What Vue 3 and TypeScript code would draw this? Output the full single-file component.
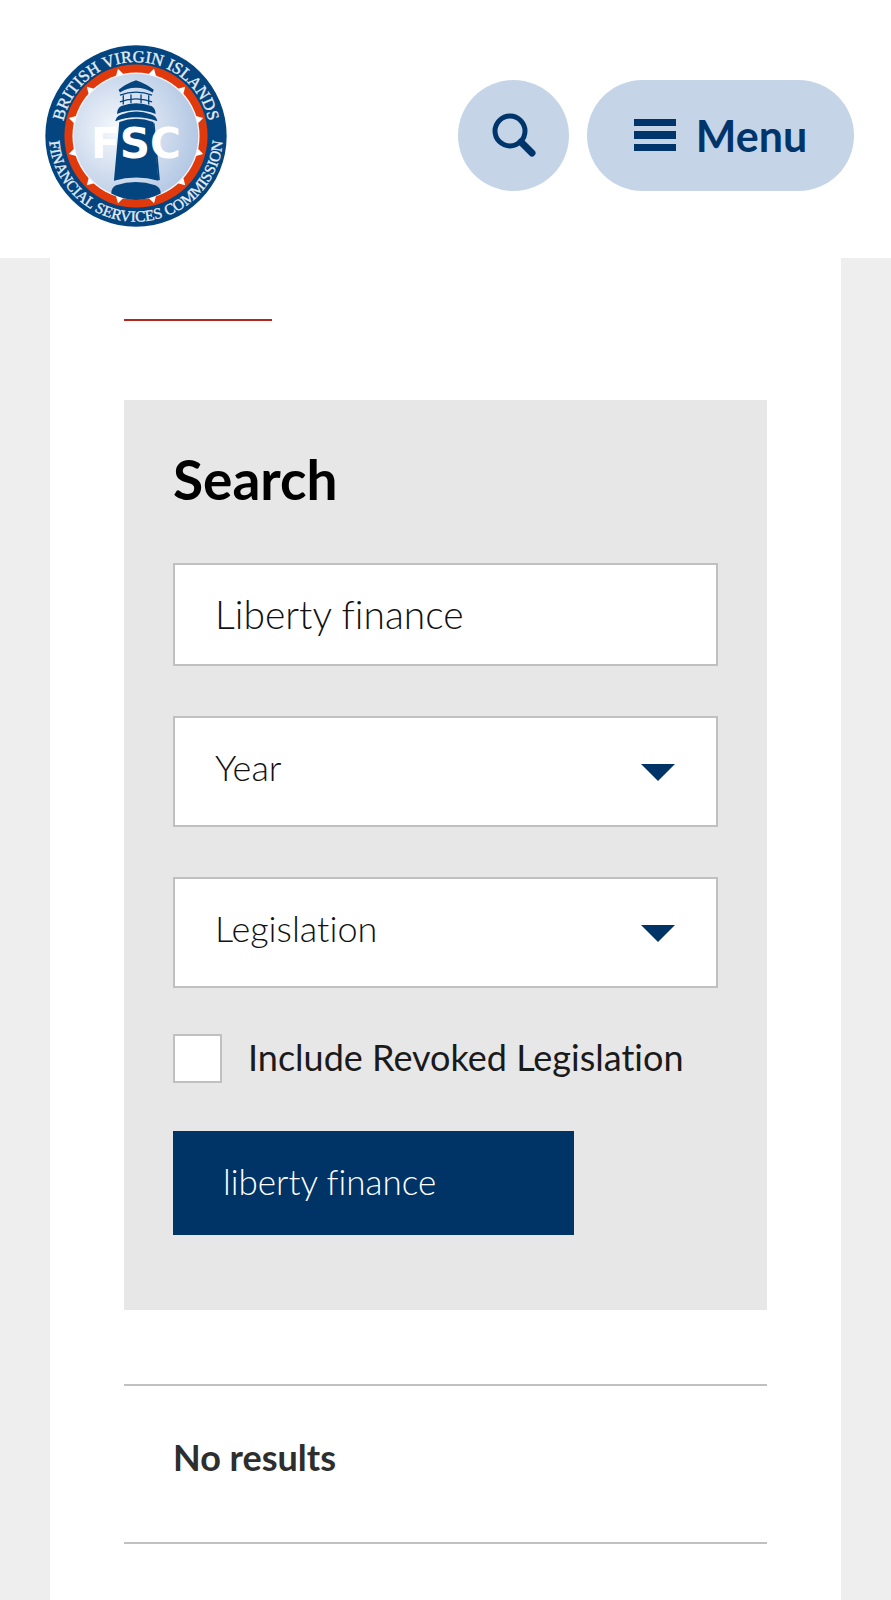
<script setup lang="ts">
import { ref } from 'vue'

const keywords = ref('Liberty finance')
const year = ref('')
const category = ref('')
const includeRevoked = ref(false)

const years: string[] = ['2024', '2023', '2022', '2021']
const categories: string[] = ['Acts', 'Regulations', 'Orders']
const notches: number[] = Array.from({ length: 12 }, (_, i) => i * 30 + 15)
</script>

<template>
  <div class="page">
    <header class="header">
      <a class="logo" href="#" aria-label="British Virgin Islands Financial Services Commission">
        <svg viewBox="0 0 544 544" aria-hidden="true">
          <defs>
            <radialGradient id="sky" cx="0.35" cy="0.45" r="0.65">
              <stop offset="0" stop-color="#f6f9fd" />
              <stop offset="0.5" stop-color="#d5e0f0" />
              <stop offset="1" stop-color="#b3c8e4" />
            </radialGradient>
            <path id="arc-top" d="M 51 272 A 221 221 0 0 1 493 272" />
            <path id="arc-bottom" d="M 12 268 A 260 260 0 0 0 532 268" />
          </defs>
          <circle cx="272" cy="272" r="271" fill="#05457f" />
          <circle cx="272" cy="272" r="214" fill="#e03a0c" />
          <path
            v-for="angle in notches"
            :key="angle"
            d="M 272 64 L 285 86 L 259 86 Z"
            fill="#fff"
            :transform="`rotate(${angle} 272 272)`"
          />
          <circle cx="272" cy="272" r="190" fill="#f4f6fa" />
          <circle cx="272" cy="272" r="186" fill="url(#sky)" />
          <g fill="#05457f">
            <path d="M 220 134 Q 240 116 272 105 Q 304 116 325 134 L 322 142 Q 300 128 272 128 Q 244 128 224 142 Z" />
            <path d="M 215 206 Q 216 188 228 182 Q 272 166 318 182 Q 330 188 331 206 Q 272 184 215 206 Z" />
            <path d="M 210 228 Q 214 212 228 208 Q 272 190 318 208 Q 332 212 336 228 Q 272 204 210 228 Z" />
            <path d="M 222 230 Q 272 211 324 230 L 339 406 Q 272 386 206 406 Z" />
            <path d="M 198 444 Q 198 426 212 419 Q 272 400 330 419 Q 346 426 346 444 Q 310 463 272 463 Q 234 463 198 444 Z" />
          </g>
          <path d="M 325 234 L 341 404" stroke="#05457f" stroke-width="5" />
          <path
            d="M 234 150 V 178 M 257 148 V 174 M 287 148 V 174 M 310 150 V 178 M 224 150 Q 272 132 320 150 M 224 170 Q 272 152 320 170"
            fill="none"
            stroke="#05457f"
            stroke-width="4"
          />
          <text class="logo-name" x="272" y="338" text-anchor="middle">FSC</text>
          <text class="logo-ring logo-ring-top" text-anchor="middle">
            <textPath href="#arc-top" startOffset="50%">BRITISH VIRGIN ISLANDS</textPath>
          </text>
          <text class="logo-ring" text-anchor="middle">
            <textPath href="#arc-bottom" startOffset="50%">FINANCIAL SERVICES COMMISSION</textPath>
          </text>
        </svg>
      </a>
      <div class="actions">
        <button class="round" type="button" aria-label="Search">
          <svg width="46" height="46" viewBox="0 0 46 46" fill="none" aria-hidden="true">
            <path d="M30 30 L41 41" stroke="#00356b" stroke-width="7" stroke-linecap="round" />
            <circle cx="19" cy="19" r="15" stroke="#00356b" stroke-width="5" />
          </svg>
        </button>
        <button class="menu" type="button">
          <svg width="42" height="32" viewBox="0 0 42 32" aria-hidden="true">
            <path d="M0 0H42V7H0ZM0 12H42V20H0ZM0 25H42V32H0Z" fill="#00356b" />
          </svg>
          <span>Menu</span>
        </button>
      </div>
    </header>

    <main class="content">
      <hr class="accent" />
      <form class="panel" @submit.prevent>
        <h2>Search</h2>
        <input v-model="keywords" class="field" type="text" aria-label="Keywords" />
        <div class="picker">
          <select v-model="year" class="field" aria-label="Year">
            <option value="">Year</option>
            <option v-for="item in years" :key="item" :value="item">{{ item }}</option>
          </select>
          <svg class="arrow" viewBox="0 0 34 17" aria-hidden="true"><path d="M0 0H34L17 17Z" fill="#003366" /></svg>
        </div>
        <div class="picker">
          <select v-model="category" class="field" aria-label="Legislation">
            <option value="">Legislation</option>
            <option v-for="item in categories" :key="item" :value="item">{{ item }}</option>
          </select>
          <svg class="arrow" viewBox="0 0 34 17" aria-hidden="true"><path d="M0 0H34L17 17Z" fill="#003366" /></svg>
        </div>
        <div class="check">
          <input id="revoked" v-model="includeRevoked" type="checkbox" />
          <label for="revoked">Include Revoked Legislation</label>
        </div>
        <button class="submit" type="submit">liberty finance</button>
      </form>
      <section class="results">
        <h3>No results</h3>
      </section>
    </main>
  </div>
</template>

<style>
body {
  margin: 0;
  background: #eeeeee;
}
</style>

<style scoped>
.page,
.page * {
  box-sizing: border-box;
}

.page {
  display: flex;
  flex-direction: column;
  min-height: 100vh;
  font-family: Lato, "Liberation Sans", sans-serif;
  font-variant-ligatures: none;
}

button,
input,
select {
  margin: 0;
  font-family: inherit;
  font-variant-ligatures: none;
}

.header {
  display: flex;
  align-items: center;
  justify-content: space-between;
  padding: 45px 37px 31px 45px;
  background: #fff;
}

.logo,
.logo svg {
  display: block;
  width: 182px;
  height: 182px;
}

.logo-name {
  font: bold 126px "DejaVu Sans", sans-serif;
  fill: #fff;
}

.logo-ring {
  font: 46px "Liberation Serif", serif;
  fill: #e4eef8;
  stroke: #e4eef8;
  stroke-width: 1;
}

.logo-ring-top {
  font-size: 50px;
}

.actions {
  display: flex;
  gap: 18px;
  padding-bottom: 2px;
}

.round,
.menu {
  display: flex;
  align-items: center;
  justify-content: center;
  height: 111px;
  padding: 0;
  border: 0;
  border-radius: 56px;
  background: #c5d5e7;
  color: #00356b;
}

.round {
  width: 111px;
}

.menu {
  gap: 20px;
  width: 267px;
  font-size: 43px;
  font-weight: 700;
}

.content {
  flex: 1;
  margin: 0 50px;
  padding: 61px 74px 56px;
  background: #fff;
}

.accent {
  width: 148px;
  height: 2px;
  margin: 0 0 79px;
  border: 0;
  background: #b3271e;
}

.panel {
  display: flex;
  flex-direction: column;
  padding: 49px 49px 75px;
  background: #e7e7e7;
}

h2 {
  margin: 0 0 54px;
  font-size: 55px;
  line-height: 60px;
  font-weight: 700;
  color: #000;
}

.field {
  display: block;
  width: 100%;
  height: 103px;
  padding: 0 40px 2px;
  border: 2px solid #c0c0c0;
  border-radius: 0;
  outline: 0;
  appearance: none;
  background: #fff;
  color: #111;
  font-size: 39px;
  font-weight: 300;
}

.picker {
  display: grid;
  align-items: center;
  margin-top: 50px;
}

.picker .field {
  grid-area: 1 / 1;
  height: 111px;
  padding-bottom: 10px;
  font-size: 36px;
}

.arrow {
  grid-area: 1 / 1;
  justify-self: end;
  width: 34px;
  height: 17px;
  margin: 2px 43px 0 0;
  pointer-events: none;
}

.check {
  display: flex;
  align-items: center;
  gap: 26px;
  margin: 46px 0 48px;
  font-size: 36px;
  line-height: 42px;
  color: #1a1a1a;
}

.check label {
  padding-bottom: 4px;
}

.check input {
  flex: none;
  width: 49px;
  height: 49px;
  border: 2px solid #c0c0c0;
  appearance: none;
  background: #fff;
}

.check input:checked {
  background: #003366;
}

.submit {
  align-self: flex-start;
  min-width: 401px;
  height: 104px;
  padding: 0 50px 4px;
  border: 0;
  background: #003366;
  color: #fff;
  font-size: 35px;
  font-weight: 300;
  text-align: left;
}

.results {
  margin-top: 74px;
  padding: 50px 49px 64px;
  border: solid #c0c0c0;
  border-width: 2px 0;
}

h3 {
  margin: 0;
  font-size: 36px;
  line-height: 42px;
  font-weight: 700;
  color: #2e2e2e;
}
</style>
